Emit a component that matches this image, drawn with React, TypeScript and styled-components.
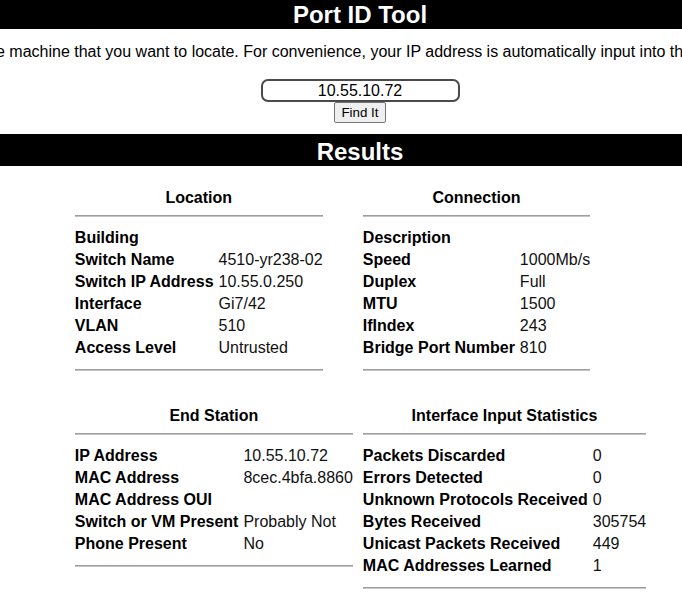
import React from "react";
import styled, { createGlobalStyle } from "styled-components";

const Global = createGlobalStyle`
  html, body { margin: 0; padding: 0; overflow: hidden; background: #fff; }
  body { font-family: "Liberation Sans", Arial, sans-serif; color: #000; }
`;

const Page = styled.div`
  width: 720px;
  display: flex;
  flex-direction: column;
`;

const Bar = styled.h1<{ $h: number; $pad?: number }>`
  margin: 0;
  background: #000;
  color: #fff;
  font-size: 24px;
  font-weight: bold;
  text-align: center;
  box-sizing: border-box;
  height: ${(p) => p.$h}px;
  padding-top: ${(p) => p.$pad ?? 0}px;
  line-height: ${(p) => p.$h - (p.$pad ?? 0)}px;
`;

const Intro = styled.div`
  display: flex;
  justify-content: center;
  margin-top: 14px;
  font-size: 16px;
  line-height: 18px;
`;

const IntroText = styled.span`
  white-space: nowrap;
  flex: none;
`;

const Form = styled.form`
  display: flex;
  flex-direction: column;
  align-items: center;
  margin: 18px 0 11px;
`;

const IpInput = styled.input`
  box-sizing: border-box;
  width: 199px;
  height: 23px;
  border: 2px solid #4a4a4a;
  border-radius: 7px;
  font-family: "Liberation Sans", Arial, sans-serif;
  font-size: 16px;
  text-align: center;
  padding: 0 4px;
  color: #000;
  outline: none;
`;

const Button = styled.button`
  box-sizing: border-box;
  height: 21px;
  padding: 0 6px;
  font-family: "Liberation Sans", Arial, sans-serif;
  font-size: 13.33px;
  background: #efefef;
  border: 1px solid #767676;
  border-radius: 2px;
  color: #000;
`;

const Grid = styled.div`
  display: grid;
  grid-template-columns: auto auto;
  justify-content: center;
  column-gap: 10px;
  row-gap: 36px;
  margin-top: 23px;
  padding-left: 1px;
`;

const Section = styled.section`
  justify-self: start;
  display: flex;
  flex-direction: column;
`;

const Heading = styled.h3`
  margin: 0;
  font-size: 16px;
  line-height: 18px;
  font-weight: bold;
  text-align: center;
`;

const Rule = styled.div<{ $top: number; $bottom: number }>`
  height: 0;
  border-top: 1px solid #9d9d9d;
  border-bottom: 1px solid #c4c4c4;
  margin-top: ${(p) => p.$top}px;
  margin-bottom: ${(p) => p.$bottom}px;
`;

const Rows = styled.div<{ $gap: number }>`
  display: grid;
  grid-template-columns: auto auto;
  column-gap: ${(p) => p.$gap}px;
  row-gap: 4px;
  font-size: 16px;
  line-height: 18px;
`;

const Label = styled.div`
  font-weight: bold;
  white-space: nowrap;
`;

const Value = styled.div`
  white-space: nowrap;
  color: #111;
`;

type Row = [string, string];

const Block = ({ title, rows, gap = 5 }: { title: string; rows: Row[]; gap?: number }) => (
  <Section>
    <Heading>{title}</Heading>
    <Rule $top={8} $bottom={12} />
    <Rows $gap={gap}>
      {rows.map(([k, v]) => (
        <React.Fragment key={k}>
          <Label>{k}</Label>
          <Value>{v}</Value>
        </React.Fragment>
      ))}
    </Rows>
    <Rule $top={12} $bottom={0} />
  </Section>
);

export default function App() {
  return (
    <Page>
      <Global />
      <Bar $h={29}>Port ID Tool</Bar>
      <Intro>
        <IntroText>
          Enter the IP address of the machine that you want to locate. For convenience, your IP address is automatically input into the field below. Then click Find It.
        </IntroText>
      </Intro>
      <Form onSubmit={(e) => e.preventDefault()}>
        <IpInput defaultValue="10.55.10.72" />
        <Button type="submit">Find It</Button>
      </Form>
      <Bar $h={32} $pad={3}>Results</Bar>
      <Grid>
        <Block
          title="Location"
          rows={[
            ["Building", ""],
            ["Switch Name", "4510-yr238-02"],
            ["Switch IP Address", "10.55.0.250"],
            ["Interface", "Gi7/42"],
            ["VLAN", "510"],
            ["Access Level", "Untrusted"],
          ]}
        />
        <Block
          title="Connection"
          rows={[
            ["Description", ""],
            ["Speed", "1000Mb/s"],
            ["Duplex", "Full"],
            ["MTU", "1500"],
            ["IfIndex", "243"],
            ["Bridge Port Number", "810"],
          ]}
        />
        <Block
          title="End Station"
          rows={[
            ["IP Address", "10.55.10.72"],
            ["MAC Address", "8cec.4bfa.8860"],
            ["MAC Address OUI", ""],
            ["Switch or VM Present", "Probably Not"],
            ["Phone Present", "No"],
          ]}
        />
        <Block
          title="Interface Input Statistics"
          rows={[
            ["Packets Discarded", "0"],
            ["Errors Detected", "0"],
            ["Unknown Protocols Received", "0"],
            ["Bytes Received", "305754"],
            ["Unicast Packets Received", "449"],
            ["MAC Addresses Learned", "1"],
          ]}
        />
      </Grid>
    </Page>
  );
}
